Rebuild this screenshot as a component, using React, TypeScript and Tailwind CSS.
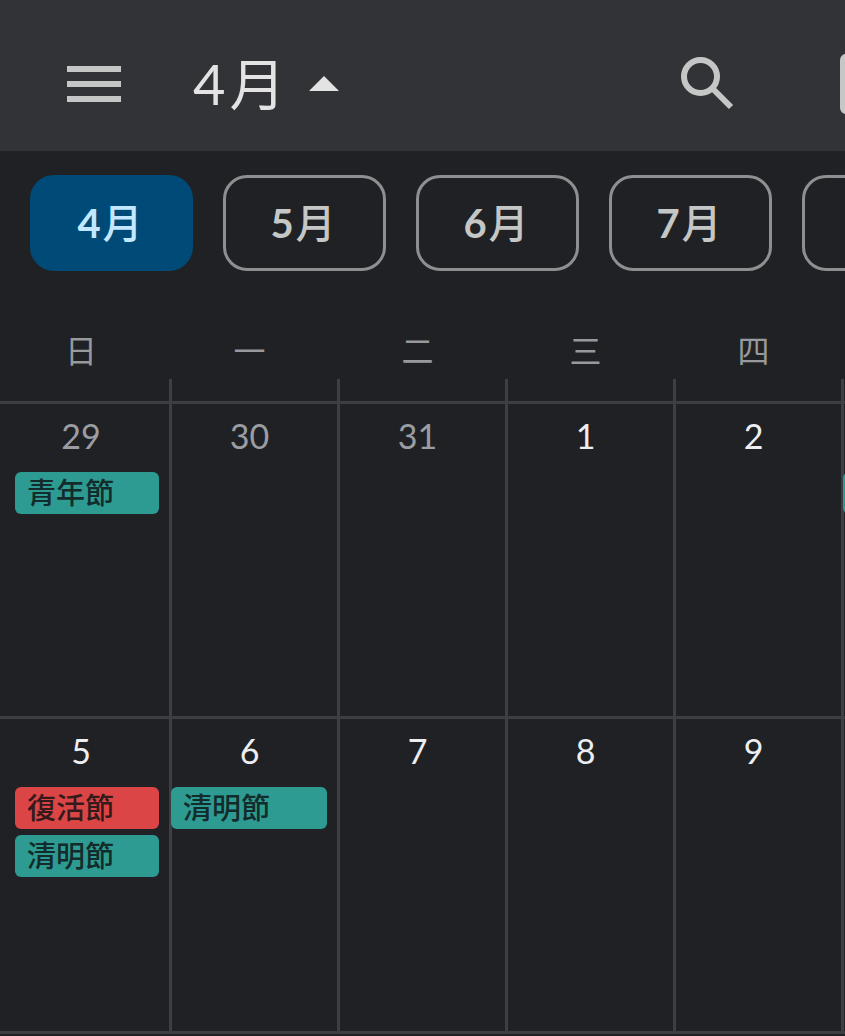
import React, { useState } from 'react';

interface CalendarEvent {
  title: string;
  color: 'teal' | 'red';
}

interface Day {
  date: number;
  muted?: boolean;
  events?: CalendarEvent[];
}

const months = [4, 5, 6, 7];

const weekdays = ['日', '一', '二', '三', '四'];

// continues: an event of the next, cut off column starts in this week
const weeks: { days: Day[]; continues: boolean }[] = [
  {
    continues: true,
    days: [
      { date: 29, muted: true, events: [{ title: '青年節', color: 'teal' }] },
      { date: 30, muted: true },
      { date: 31, muted: true },
      { date: 1 },
      { date: 2 },
    ],
  },
  {
    continues: false,
    days: [
      {
        date: 5,
        events: [
          { title: '復活節', color: 'red' },
          { title: '清明節', color: 'teal' },
        ],
      },
      { date: 6, events: [{ title: '清明節', color: 'teal' }] },
      { date: 7 },
      { date: 8 },
      { date: 9 },
    ],
  },
];

const eventColors = {
  teal: 'bg-[#2d9b91] text-[#132c2b]',
  red: 'bg-[#dc4545] text-[#351a1c]',
};

const MenuIcon = () => (
  <svg className="w-[54px] h-9" viewBox="0 0 54 36" fill="currentColor" aria-hidden="true">
    <path d="M0 0h54v6H0zM0 15h54v6H0zM0 30h54v6H0z" />
  </svg>
);

const SearchIcon = () => (
  <svg className="w-[53px] h-[53px]" viewBox="0 0 53 53" fill="none" stroke="currentColor" strokeWidth="6" aria-hidden="true">
    <circle cx="19.5" cy="19.5" r="16.5" />
    <path d="M31 31L50 50" />
  </svg>
);

const TodayIcon = () => (
  <svg className="w-[54px] h-[60px]" viewBox="0 0 54 60" fill="none" stroke="currentColor" strokeWidth="6" aria-hidden="true">
    <rect x="3" y="3" width="48" height="54" rx="3" />
    <path d="M3 12h48" strokeWidth="12" />
  </svg>
);

const Header: React.FC<{ month: number; open: boolean; onToggle: () => void }> = ({ month, open, onToggle }) => (
  <header className="flex items-center h-[151px] pt-4 pl-[67px] bg-[#323336] text-[#c5c7c6] overflow-hidden">
    <button aria-label="選單" className="shrink-0">
      <MenuIcon />
    </button>
    <button
      onClick={onToggle}
      aria-expanded={open}
      className="flex items-center gap-6 ml-[72px] text-[56px] leading-none text-[#e3e3e4]"
    >
      <span className="flex items-baseline gap-1">
        <span>{month}</span>
        <span>月</span>
      </span>
      <svg className={open ? 'w-[30px] h-[15px]' : 'w-[30px] h-[15px] rotate-180'} viewBox="0 0 30 15" fill="currentColor" aria-hidden="true">
        <path d="M15 0l15 15H0z" />
      </svg>
    </button>
    <div className="flex items-center gap-[106px] shrink-0 ml-auto -mr-[49px]">
      <button aria-label="搜尋">
        <SearchIcon />
      </button>
      <button aria-label="今天">
        <TodayIcon />
      </button>
    </div>
  </header>
);

const MonthTabs: React.FC<{ current: number; onSelect: (month: number) => void }> = ({ current, onSelect }) => (
  <nav className="flex gap-[30px] pt-6 pl-[30px] overflow-hidden">
    {months.map((month) => (
      <button
        key={month}
        onClick={() => onSelect(month)}
        aria-pressed={current === month}
        className={`flex items-center justify-center gap-[2px] shrink-0 w-[163px] h-24 pr-[3px] border-3 rounded-3xl text-[40px] leading-none font-medium ${
          current === month
            ? 'border-[#004a77] bg-[#004a77] text-[#c2e7ff]'
            : 'border-[#8e8f91] text-[#c5c7c6]'
        }`}
      >
        <span className="font-bold">{month}</span>
        <span>月</span>
      </button>
    ))}
    <button aria-label="8月" className="shrink-0 w-[163px] h-24 border-3 rounded-3xl border-[#8e8f91]" />
  </nav>
);

const DayCell: React.FC<{ day: Day }> = ({ day }) => (
  <td className="group h-[315px] p-0 pr-[10px] first:pl-[3px] align-top border-r-3 border-b-3 border-[#3c3f42]">
    <div className={`pt-2 text-center text-[34px] leading-[48px] ${day.muted ? 'text-[#9a9da2]' : 'text-[#eceef2]'}`}>
      {day.date}
    </div>
    <ul className="flex flex-col gap-[6px] mt-3 -ml-px group-first:ml-3">
      {day.events?.map((event) => (
        <li key={event.title}>
          <button
            className={`block w-full h-[42px] pl-3 rounded-md text-left text-[29px] leading-[42px] font-medium whitespace-nowrap ${eventColors[event.color]}`}
          >
            {event.title}
          </button>
        </li>
      ))}
    </ul>
  </td>
);

const App: React.FC = () => {
  const [month, setMonth] = useState(4);
  const [open, setOpen] = useState(true);

  return (
    <div className="min-h-screen bg-[#202124] font-['Lato','Noto_Sans_CJK_TC',sans-serif] overflow-hidden">
      <Header month={month} open={open} onToggle={() => setOpen(!open)} />
      {open && <MonthTabs current={month} onSelect={setMonth} />}
      <main className="pt-[54px] overflow-hidden">
        {/* The last column runs past the right edge */}
        <table className="w-[calc(100%+167px)] table-fixed border-separate border-spacing-0">
          <thead>
            <tr>
              {weekdays.map((weekday) => (
                <th
                  key={weekday}
                  scope="col"
                  className="h-[54px] p-0 pr-[13px] first:w-[172px] first:pl-[3px] align-top text-[32px] leading-[52px] font-normal text-[#97999c]"
                >
                  {weekday}
                </th>
              ))}
              <td />
            </tr>
            <tr aria-hidden="true">
              {weekdays.map((weekday) => (
                <td key={weekday} className="h-[25px] p-0 border-r-3 border-b-3 border-[#3c3f42]" />
              ))}
              <td className="border-b-3 border-[#3c3f42]" />
            </tr>
          </thead>
          <tbody>
            {weeks.map(({ days, continues }) => (
              <tr key={days[0].date}>
                {days.map((day) => (
                  <DayCell key={day.date} day={day} />
                ))}
                <td className="p-0 pt-[68px] align-top border-b-3 border-[#3c3f42]">
                  {continues && <div className="h-[42px] -ml-px mr-[10px] rounded-md bg-[#2d9b91]" />}
                </td>
              </tr>
            ))}
          </tbody>
        </table>
      </main>
    </div>
  );
};

export default App;
